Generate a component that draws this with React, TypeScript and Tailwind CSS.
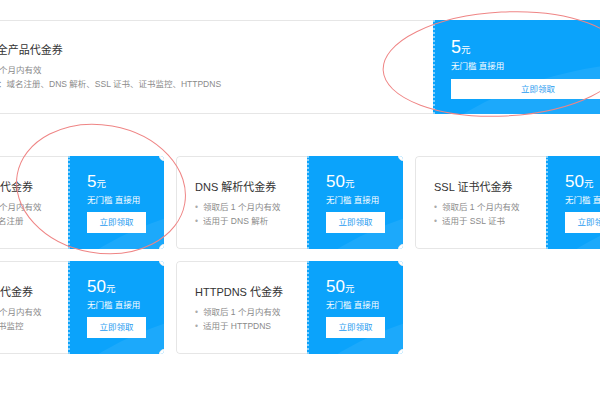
import React from "react";

const BLUE = "bg-[#0ba3fb]";

type CardProps = {
  title: string;
  lines: string[];
  amount: string;
};

function Blue({ amount, top }: { amount: string; top?: boolean }) {
  return (
    <div
      className={`relative ${BLUE} overflow-hidden border-l-2 border-dotted border-white/50 ${
        top ? "w-[209px] pl-[16px] pt-[17px]" : "w-[96px] pl-[17px] pt-[16px]"
      }`}
    >
      <div className="pointer-events-none absolute left-[-40px] top-[52%] h-[200px] w-[400px] rotate-[-12deg] rounded-[50%] bg-white/[0.07]" />
      <div className="relative flex items-baseline text-white leading-[20px]">
        <span className={top ? "text-[18px]" : "text-[17px]"}>{amount}</span>
        <span className="text-[9.5px]">元</span>
      </div>
      <div className="relative whitespace-nowrap text-[8.5px] leading-[12px] text-white">
        无门槛 直接用
      </div>
      <div
        className={`relative flex items-center justify-center bg-white text-[8.5px] text-[#2a9cf0] ${
          top ? "mt-[7px] h-[20px] w-[174px]" : "mt-[6px] h-[21px] w-[59px]"
        }`}
      >
        立即领取
      </div>
    </div>
  );
}

function Lines({ lines }: { lines: string[] }) {
  return (
    <div className="mt-[6px] text-[8.5px] leading-[14px] text-[#8a8a8a]">
      {lines.map((l) => (
        <div key={l} className="flex whitespace-nowrap">
          <span className="w-[8px] text-[#aaa]">•</span>
          <span>{l}</span>
        </div>
      ))}
    </div>
  );
}

function Card({ title, lines, amount }: CardProps) {
  return (
    <div className="relative flex h-[93px] overflow-hidden rounded-[4px]">
      <div className="w-[131px] rounded-l-[4px] border border-r-0 border-[#e6e6e6] pl-[18px] pt-[23px]">
        <div className="whitespace-nowrap text-[11px] leading-[14px] text-[#333]">{title}</div>
        <Lines lines={lines} />
      </div>
      <Blue amount={amount} />
      <div className="absolute right-[-5px] top-[-5px] h-[10px] w-[10px] rounded-full border border-[#ececec] bg-white" />
      <div className="absolute bottom-[-5px] right-[-5px] h-[10px] w-[10px] rounded-full border border-[#ececec] bg-white" />
    </div>
  );
}

export default function App() {
  const cards: CardProps[] = [
    { title: "域名注册代金券", lines: ["领取后 1 个月内有效", "适用于域名注册"], amount: "5" },
    { title: "DNS 解析代金券", lines: ["领取后 1 个月内有效", "适用于 DNS 解析"], amount: "50" },
    { title: "SSL 证书代金券", lines: ["领取后 1 个月内有效", "适用于 SSL 证书"], amount: "50" },
    { title: "证书监控代金券", lines: ["领取后 1 个月内有效", "适用于证书监控"], amount: "50" },
    { title: "HTTPDNS 代金券", lines: ["领取后 1 个月内有效", "适用于 HTTPDNS"], amount: "50" },
  ];
  return (
    <div
      className="relative h-[400px] w-[600px] overflow-hidden bg-white"
      style={{ fontFamily: "'Liberation Sans', 'Noto Sans CJK SC', sans-serif" }}
    >
      <div className="ml-[-63px] w-[705px] pt-[20px]">
        <div className="flex h-[94px]">
          <div className="flex-1 border border-r-0 border-[#e6e6e6] pl-[18px] pt-[22px]">
            <div className="ml-[-5px] whitespace-nowrap text-[11px] leading-[14px] text-[#333]">
              DNSPod 全产品代金券
            </div>
            <Lines
              lines={[
                "领取后 1 个月内有效",
                "适用产品：域名注册、DNS 解析、SSL 证书、证书监控、HTTPDNS",
              ]}
            />
          </div>
          <Blue amount="5" top />
        </div>

        <div className="mt-[42px] grid grid-cols-[227px_227px_227px] gap-x-[12px] gap-y-[12px]">
          {cards.map((c) => (
            <Card key={c.title} {...c} />
          ))}
        </div>
      </div>

      <svg className="pointer-events-none absolute left-0 top-0" width="600" height="400">
        <ellipse
          cx="504"
          cy="64"
          rx="121"
          ry="52"
          fill="none"
          stroke="#ef8585"
          strokeWidth="1"
          transform="rotate(-3 504 64)"
        />
        <ellipse
          cx="101"
          cy="189"
          rx="85"
          ry="64"
          fill="none"
          stroke="#ef8585"
          strokeWidth="1"
          transform="rotate(10 101 189)"
        />
      </svg>
    </div>
  );
}
